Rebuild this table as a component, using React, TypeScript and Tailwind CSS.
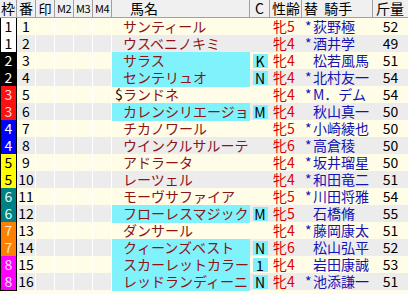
import React from 'react';

type Horse = {
  waku: number;
  no: number;
  mark?: string;
  name: string;
  c?: string;
  sex: string;
  jockey: string;
  weight: number;
};

const horses: Horse[] = [
  { waku: 1, no: 1, name: 'サンティール', sex: '牝5', jockey: '*荻野極', weight: 52 },
  { waku: 1, no: 2, name: 'ウスベニノキミ', sex: '牝4', jockey: '*酒井学', weight: 49 },
  { waku: 2, no: 3, name: 'サラス', c: 'K', sex: '牝4', jockey: ' 松若風馬', weight: 51 },
  { waku: 2, no: 4, name: 'センテリュオ', c: 'N', sex: '牝4', jockey: '*北村友一', weight: 54 },
  { waku: 3, no: 5, mark: '$', name: 'ランドネ', sex: '牝4', jockey: '*M．デム', weight: 54 },
  { waku: 3, no: 6, name: 'カレンシリエージョ', c: 'M', sex: '牝4', jockey: ' 秋山真一', weight: 50 },
  { waku: 4, no: 7, name: 'チカノワール', sex: '牝5', jockey: '*小崎綾也', weight: 50 },
  { waku: 4, no: 8, name: 'ウインクルサルーテ', sex: '牝6', jockey: '*高倉稜', weight: 50 },
  { waku: 5, no: 9, name: 'アドラータ', sex: '牝4', jockey: '*坂井瑠星', weight: 50 },
  { waku: 5, no: 10, name: 'レーツェル', sex: '牝4', jockey: '*和田竜二', weight: 51 },
  { waku: 6, no: 11, name: 'モーヴサファイア', sex: '牝5', jockey: '*川田将雅', weight: 54 },
  { waku: 6, no: 12, name: 'フローレスマジック', c: 'M', sex: '牝5', jockey: ' 石橋脩', weight: 55 },
  { waku: 7, no: 13, name: 'ダンサール', sex: '牝4', jockey: '*藤岡康太', weight: 51 },
  { waku: 7, no: 14, name: 'クィーンズベスト', c: 'N', sex: '牝6', jockey: ' 松山弘平', weight: 52 },
  { waku: 8, no: 15, name: 'スカーレットカラー', c: '1', sex: '牝4', jockey: ' 岩田康誠', weight: 53 },
  { waku: 8, no: 16, name: 'レッドランディーニ', c: 'N', sex: '牝4', jockey: '*池添謙一', weight: 51 },
];

const wakuStyle: Record<number, string> = {
  1: 'bg-white text-black',
  2: 'bg-black text-white',
  3: 'bg-[#ff1010] text-[#ffd8d8]',
  4: 'bg-[#0000ff] text-white',
  5: 'bg-[#ffff00] text-black',
  6: 'bg-[#008080] text-[#e0ffff]',
  7: 'bg-[#ff8000] text-[#ffe8d0]',
  8: 'bg-[#ff00ff] text-[#ffe0ff]',
};

const cols = 'grid grid-cols-[17px_19px_19px_19px_19px_19px_138px_20px_32px_71px_35px]';

const App: React.FC = () => {
  return (
    <div className="min-h-screen w-[408px] bg-[#fffde8] font-['Noto_Sans_CJK_JP',sans-serif] text-[14px] leading-[17px] text-black">
      {/* header */}
      <div className={`${cols} h-[18px] bg-[#f0f0f0] border-b border-[#a0a0a0]`}>
        <div className="border-r border-[#a0a0a0] text-center">枠</div>
        <div className="border-r border-[#a0a0a0] text-center">番</div>
        <div className="border-r border-[#a0a0a0] text-center text-[13px]">印</div>
        <div className="border-r border-[#a0a0a0] text-center text-[11px] tracking-[-0.5px]">M2</div>
        <div className="border-r border-[#a0a0a0] text-center text-[11px] tracking-[-0.5px]">M3</div>
        <div className="border-r border-[#a0a0a0] text-center text-[11px] tracking-[-0.5px]">M4</div>
        <div className="border-r border-[#a0a0a0] pl-[18px]">馬名</div>
        <div className="border-r border-[#a0a0a0] text-center">C</div>
        <div className="border-r border-[#a0a0a0] pl-[2px]">性齢</div>
        <div className="border-r border-[#a0a0a0] pl-[2px] whitespace-pre">替  騎手</div>
        <div className="pl-[3px]">斤量</div>
      </div>

      {horses.map((h, i) => {
        const rowBg = i % 2 === 0 ? 'bg-[#fffde8]' : 'bg-[#ececec]';
        return (
          <div key={h.no} className={`${cols} h-[17px] ${rowBg}`}>
            <div className={`border-x border-b border-black text-center ${wakuStyle[h.waku]}`}>{h.waku}</div>
            <div className="border-r border-white text-center">{h.no}</div>
            <div className="border-r border-white" />
            <div className="border-r border-white" />
            <div className="border-r border-white" />
            <div className="border-r border-white" />
            <div
              className={`flex pl-[3px] text-[#8c1414] whitespace-nowrap overflow-hidden ${
                h.c ? 'bg-[#80f2fc]' : ''
              }`}
            >
              <span className="w-[8px] text-black">{h.mark ?? ''}</span>
              <span>{h.name}</span>
            </div>
            <div className="flex items-center justify-center">
              {h.c && (
                <span className="w-[15px] h-[14px] bg-[#80f2fc] text-center leading-[14px]">{h.c}</span>
              )}
            </div>
            <div className="pl-[3px] text-[#dd0000]">{h.sex}</div>
            <div className="flex pl-[3px] text-[#1414b4] whitespace-nowrap">
              <span className="w-[8px]">{h.jockey[0] === '*' ? '*' : ''}</span>
              <span>{h.jockey.slice(1)}</span>
            </div>
            <div className="text-center">{h.weight}</div>
          </div>
        );
      })}
    </div>
  );
};

export default App;
